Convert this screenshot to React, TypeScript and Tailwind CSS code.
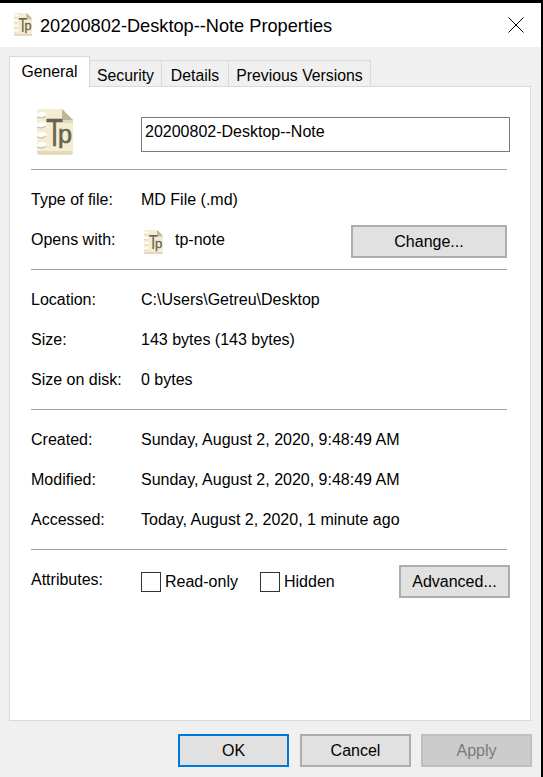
import React from 'react';

const FONT = 'font-["Liberation_Sans",sans-serif]';

function NoteIcon({ className }: { className: string }) {
    return (
        <svg viewBox="0 0 36 46" className={className}>
            <path d="M3 0H25L36 11V43Q36 46 33 46H3Q0 46 0 43V3Q0 0 3 0Z" fill="#f5edd2" />
            <path d="M0 42H36V43Q36 46 33 46H3Q0 46 0 43Z" fill="#e3dabb" />
            <path d="M25 0L36 11V14H25Z" fill="#e3dabb" />
            <path d="M25 0L36 11H25Z" fill="#bdb59c" />
            {[5, 15, 25, 35].map((y) => (
                <g key={y}>
                    <ellipse cx="5" cy={y + 1} rx="5" ry="3" fill="#ffffff" />
                    <path d={`M0 ${y + 3}Q5 ${y + 5} 9 ${y + 2}`} stroke="#c9c1a6" strokeWidth="1.2" fill="none" />
                </g>
            ))}
            <text x="9" y="37" fontFamily="Liberation Sans, sans-serif" fontSize="39" textLength="17" lengthAdjust="spacingAndGlyphs" fill="#6a6250" stroke="#6a6250" strokeWidth="0.4">T</text>
            <text x="21" y="34" fontFamily="Liberation Sans, sans-serif" fontSize="25" textLength="14" lengthAdjust="spacingAndGlyphs" fill="#6a6250" stroke="#6a6250" strokeWidth="0.6">p</text>
        </svg>
    );
}

function Divider() {
    return <div className="h-px bg-[#a0a0a0] ml-[21px] mr-[23px]" />;
}

function Row({ label, value }: { label: string; value: string }) {
    return (
        <div className="flex items-center h-10">
            <span className="w-[110px] shrink-0">{label}</span>
            <span>{value}</span>
        </div>
    );
}

function Section({ rows }: { rows: string[][] }) {
    return (
        <div className="pl-[21px] pt-2.5 pb-[9px]">
            {rows.map(([label, value]) => (
                <Row key={label} label={label} value={value} />
            ))}
        </div>
    );
}

function Btn({ children, className }: { children: React.ReactNode; className: string }) {
    return (
        <button className={`w-[111px] h-[33px] flex items-center justify-center border-2 bg-[#e1e1e1] ${className}`}>
            {children}
        </button>
    );
}

export default function App() {
    return (
        <div className={`w-[543px] h-[777px] overflow-hidden flex flex-col bg-[#f0f0f0] border-t-[3px] border-r-2 border-black text-[16px] text-black ${FONT}`}>
            {/* Title bar */}
            <div className="h-11 shrink-0 bg-white flex items-center pl-3.5 pr-[17px]">
                <NoteIcon className="w-[18px] h-[23px] -mt-px" />
                <span className="ml-2 text-[18.2px] flex-1 mt-[3px]">20200802-Desktop--Note Properties</span>
                <svg width="16" height="16" viewBox="0 0 16 16" className="-mt-px">
                    <path d="M0.5 0.5L15.5 15.5M15.5 0.5L0.5 15.5" stroke="#000" strokeWidth="1" />
                </svg>
            </div>

            {/* Tabs */}
            <div className="flex items-end h-10 pl-[9px] shrink-0 relative z-10 -mb-px text-[15.8px]">
                <div className="w-[81px] h-[31px] bg-white border border-b-0 border-[#d9d9d9] flex items-center justify-center">General</div>
                <div className="w-[72px] h-[27px] bg-[#f0f0f0] border border-l-0 border-[#d9d9d9] flex items-center justify-center pt-1">Security</div>
                <div className="w-[67px] h-[27px] bg-[#f0f0f0] border border-l-0 border-[#d9d9d9] flex items-center justify-center pt-1">Details</div>
                <div className="w-[142px] h-[27px] bg-[#f0f0f0] border border-l-0 border-[#d9d9d9] flex items-center justify-center pt-1">Previous Versions</div>
            </div>

            {/* Page */}
            <div className="ml-[9px] w-[522px] h-[635px] bg-white border border-[#d9d9d9] shrink-0">
                <div className="h-[82px] flex pl-[27px] pr-[20px] pt-[22px]">
                    <NoteIcon className="w-9 h-[46px] shrink-0" />
                    <div className="ml-[68px] mt-2 flex-1 h-[35px] border border-[#7a7a7a] flex items-center pl-[3px] pb-[5px]">20200802-Desktop--Note</div>
                </div>
                <Divider />
                <div className="pl-[21px] pt-2.5 pb-[9px]">
                    <Row label="Type of file:" value="MD File (.md)" />
                    <div className="flex items-center h-10">
                        <span className="w-[110px] shrink-0 -mt-px">Opens with:</span>
                        <NoteIcon className="w-[19px] h-[24px] ml-[3px] mt-[3px]" />
                        <span className="ml-3 -mt-px">tp-note</span>
                        <button className="ml-auto mr-[23px] mt-[3px] w-[156px] h-[33px] border-2 border-[#adadad] bg-[#e1e1e1]">Change...</button>
                    </div>
                </div>
                <Divider />
                <Section rows={[["Location:", "C:\\Users\\Getreu\\Desktop"], ["Size:", "143 bytes (143 bytes)"], ["Size on disk:", "0 bytes"]]} />
                <Divider />
                <Section rows={[["Created:", "Sunday, August 2, 2020, 9:48:49 AM"], ["Modified:", "Sunday, August 2, 2020, 9:48:49 AM"], ["Accessed:", "Today, August 2, 2020, 1 minute ago"]]} />
                <Divider />
                <div className="flex items-center pl-[21px] pr-[20px] pt-[15px]">
                    <span className="w-[110px] shrink-0 -mt-1">Attributes:</span>
                    <span className="w-5 h-5 border border-[#333] shrink-0" />
                    <span className="ml-1 w-[95px]">Read-only</span>
                    <span className="w-5 h-5 border border-[#333] shrink-0" />
                    <span className="ml-1">Hidden</span>
                    <Btn className="ml-auto border-[#adadad]">Advanced...</Btn>
                </div>
            </div>

            {/* Footer */}
            <div className="flex justify-end gap-[10px] pr-[9px] pt-[13px]">
                <Btn className="border-[#0078d7] mr-px">OK</Btn>
                <Btn className="border-[#adadad]">Cancel</Btn>
                <Btn className="border-[#bfbfbf] !bg-[#cccccc] text-[#7a7a7a]">Apply</Btn>
            </div>
        </div>
    );
}
